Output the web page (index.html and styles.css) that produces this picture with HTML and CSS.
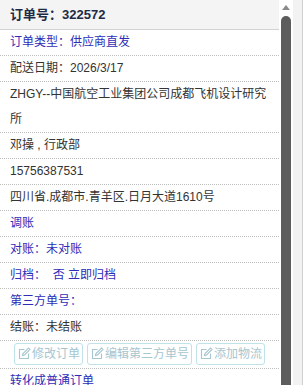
FILE: index.html
```html
<!DOCTYPE html>
<html lang="zh-CN">
<head>
    <meta charset="UTF-8">
    <meta name="viewport" content="width=device-width, initial-scale=1.0">
    <title>订单详情</title>
    <link rel="stylesheet" href="styles.css">
</head>
<body>
    <div class="page">
        <div class="panel">
            <div class="order-head">订单号：322572</div>
            <div class="row link">订单类型：供应商直发</div>
            <div class="row">配送日期：2026/3/17</div>
            <div class="row">ZHGY--中国航空工业集团公司成都飞机设计研究所</div>
            <div class="row">邓操 , 行政部</div>
            <div class="row">15756387531</div>
            <div class="row">四川省.成都市.青羊区.日月大道1610号</div>
            <div class="row link">调账</div>
            <div class="row link">对账：未对账</div>
            <div class="row link">归档：&nbsp; 否 立即归档</div>
            <div class="row link">第三方单号：</div>
            <div class="row">结账：未结账</div>
            <div class="row buttons">
                <span class="btn"><svg viewBox="0 0 14 14"><path d="M7.5 2.5H2.5v9h9V6.5"/><path d="M5.5 8.5l.5-2 5.5-5.5 1.5 1.5L7.5 8z"/></svg>修改订单</span>
                <span class="btn"><svg viewBox="0 0 14 14"><path d="M7.5 2.5H2.5v9h9V6.5"/><path d="M5.5 8.5l.5-2 5.5-5.5 1.5 1.5L7.5 8z"/></svg>编辑第三方单号</span>
                <span class="btn"><svg viewBox="0 0 14 14"><path d="M7.5 2.5H2.5v9h9V6.5"/><path d="M5.5 8.5l.5-2 5.5-5.5 1.5 1.5L7.5 8z"/></svg>添加物流</span>
            </div>
            <div class="row link">转化成普通订单</div>
        </div>
        <div class="scrollbar">
            <div class="arrow"></div>
            <div class="thumb"></div>
        </div>
        <div class="side">
            <div class="side-box"></div>
        </div>
    </div>
</body>
</html>
```

FILE: styles.css
```css
body {
    margin: 0;
    padding: 0;
    font-family: "Liberation Sans", "Noto Sans CJK SC", sans-serif;
    font-size: 12px;
    color: #333;
    background: #fff;
}
.page {
    display: flex;
    height: 385px;
    overflow: hidden;
}
.panel {
    width: 279px;
    flex-shrink: 0;
}
.order-head {
    height: 29px;
    line-height: 29px;
    padding: 0 10px;
    background: #f4f4f4;
    border-bottom: 1px solid #d2d2d2;
    font-size: 13px;
    font-weight: bold;
    color: #1f2a44;
}
.row {
    line-height: 25px;
    padding: 0 8px 0 10px;
    border-bottom: 1px dotted #bdbdbd;
}
.link {
    color: #2d2db8;
}
.buttons {
    display: flex;
    gap: 4px;
    padding: 2px 0 3px 14px;
    line-height: 20px;
}
.btn {
    display: flex;
    align-items: center;
    padding: 0 2px;
    border: 1px solid #bfe3e8;
    border-radius: 3px;
    color: #a6c6d0;
    font-size: 12px;
}
.btn svg {
    width: 14px;
    height: 14px;
    margin-right: 1px;
    fill: none;
    stroke: #a6c6d0;
    stroke-width: 1.1;
}
.scrollbar {
    width: 14px;
    flex-shrink: 0;
    display: flex;
    flex-direction: column;
    align-items: center;
    background: #fff;
}
.arrow {
    margin-top: 5px;
    width: 0;
    height: 0;
    border-left: 4px solid transparent;
    border-right: 4px solid transparent;
    border-bottom: 5px solid #8a8a8a;
}
.thumb {
    margin-top: 6px;
    width: 10px;
    flex: 1;
    background: #5c5c5c;
    border-radius: 5px 5px 0 0;
}
.side {
    flex: 1;
    background: #f2f2f2;
    display: flex;
    justify-content: flex-end;
}
.side-box {
    width: 3px;
    border-left: 1px solid #cfcfcf;
    background: #fff;
}
```
